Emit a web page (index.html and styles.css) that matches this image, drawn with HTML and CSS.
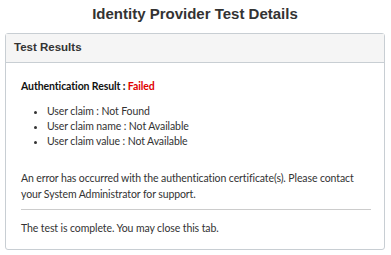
FILE: index.html
```html
<!DOCTYPE html>
<html lang="en">
<head>
    <meta charset="UTF-8">
    <meta name="viewport" content="width=device-width, initial-scale=1.0">
    <title>Identity Provider Test Details</title>
    <link rel="stylesheet" href="styles.css">
</head>
<body>
    <h1>Identity Provider Test Details</h1>

    <div class="panel">
        <div class="panel-heading">Test Results</div>
        <div class="panel-body">
            <p class="result"><strong>Authentication Result : <span class="failed">Failed</span></strong></p>
            <ul class="claims">
                <li>User claim : Not Found</li>
                <li>User claim name : Not Available</li>
                <li>User claim value : Not Available</li>
            </ul>
            <p class="message">An error has occurred with the authentication certificate(s). Please contact your System Administrator for support.</p>
            <hr>
            <p class="message">The test is complete. You may close this tab.</p>
        </div>
    </div>
</body>
</html>
```
FILE: styles.css
```css
body {
    font-family: Lato, "Open Sans", sans-serif;
    font-size: 10.5px;
    letter-spacing: -0.1px;
    color: #333;
    background-color: #fff;
    margin: 0;
    padding: 0 6px 0 5px;
}
h1 {
    font-family: "Liberation Sans", Arial, sans-serif;
    font-size: 15px;
    font-weight: bold;
    letter-spacing: 0;
    text-align: center;
    margin: 0;
    padding-top: 5px;
    height: 28px;
    color: #333;
}
.panel {
    border: 1px solid #c8ced3;
    border-radius: 3px;
}
.panel-heading {
    font-family: "Liberation Sans", Arial, sans-serif;
    font-size: 11.5px;
    font-weight: bold;
    letter-spacing: 0;
    background-color: #f5f5f5;
    border-bottom: 1px solid #c8ced3;
    padding: 7px 8px 6px 8px;
    height: 15px;
}
.panel-body {
    padding: 15px 13px 13px 15px;
}
p {
    margin: 0;
    line-height: 16px;
}
.result {
    color: #111;
    margin-bottom: 10px;
}
.failed {
    color: #e00000;
}
.claims {
    margin: 0 0 21px 0;
    padding-left: 26px;
    line-height: 15px;
}
hr {
    border: 0;
    border-top: 1px solid #ccc;
    margin: 7px 0 10px 0;
}
```
